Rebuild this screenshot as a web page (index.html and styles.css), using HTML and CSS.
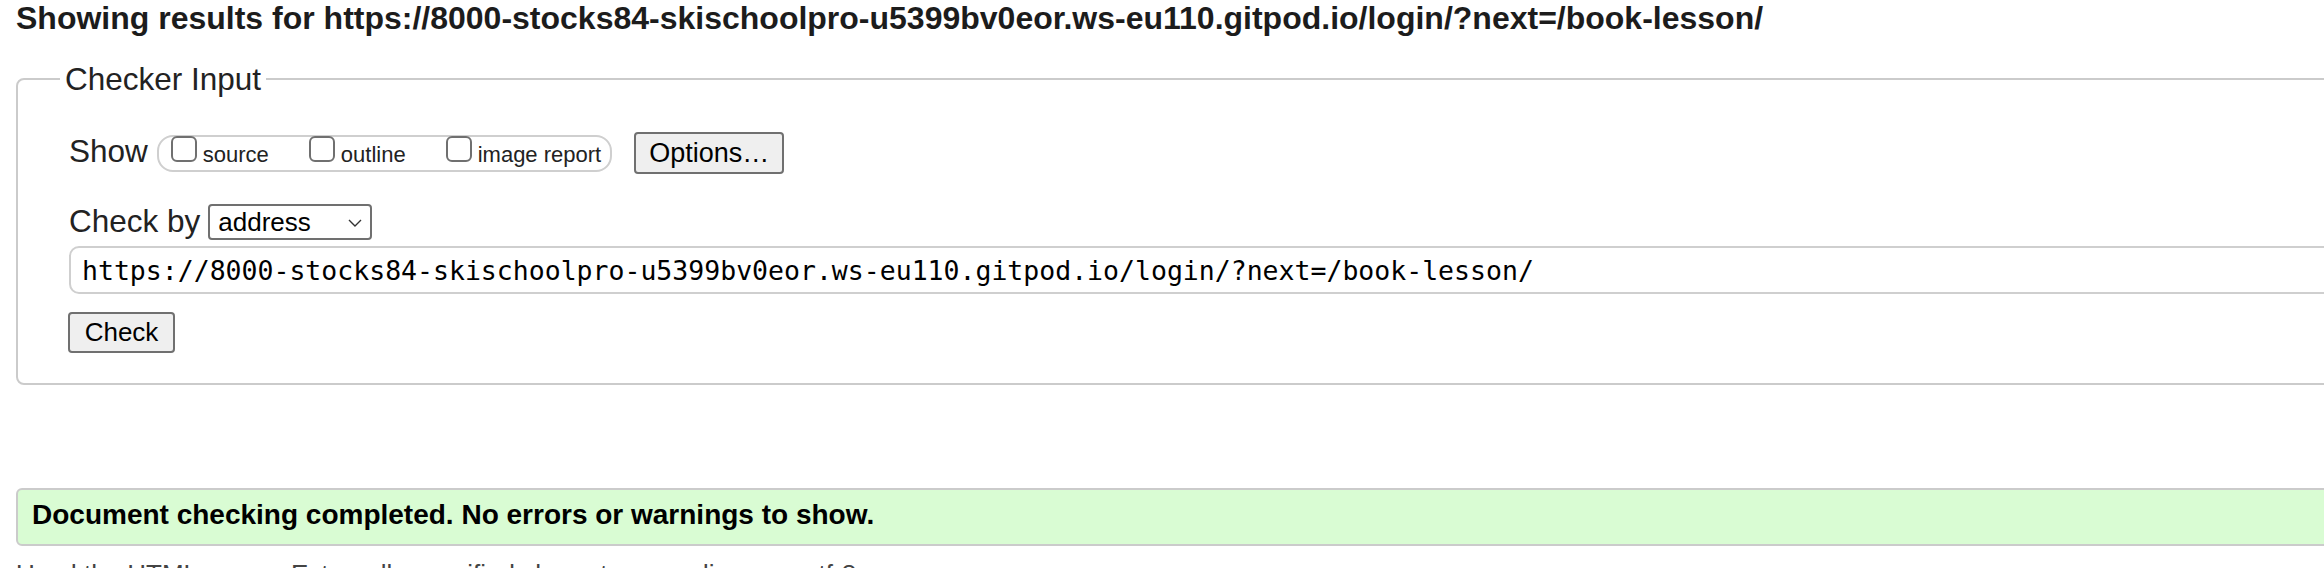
FILE: index.html
```html
<!DOCTYPE html>
<html lang="en">
<head>
<meta charset="utf-8">
<title>Showing results for https://8000-stocks84-skischoolpro-u5399bv0eor.ws-eu110.gitpod.io/login/?next=/book-lesson/ - Nu Html Checker</title>
<link rel="stylesheet" href="styles.css">
</head>
<body>
<h2 class="results-title">Showing results for https://8000-stocks84-skischoolpro-u5399bv0eor.ws-eu110.gitpod.io/login/?next=/book-lesson/</h2>
<form class="checker-form">
<fieldset class="checker-input">
<legend class="checker-legend">Checker Input</legend>
<div class="show-row">
<span class="row-label">Show</span>
<span class="show-pill"><label class="opt"><input class="cb" type="checkbox">source</label><label class="opt"><input class="cb" type="checkbox">outline</label><label class="opt"><input class="cb" type="checkbox">image report</label></span>
<button type="button" class="btn btn-options">Options…</button>
</div>
<div class="checkby-row">
<span class="row-label">Check by</span>
<span class="select-wrap">
<select class="select"><option>address</option></select>
<svg class="chevron" width="14" height="8" viewBox="0 0 14 8"><path d="M1 1 L7 7 L13 1" fill="none" stroke="#333" stroke-width="1.4"/></svg>
</span>
</div>
<input class="url-input" type="text" value="https://8000-stocks84-skischoolpro-u5399bv0eor.ws-eu110.gitpod.io/login/?next=/book-lesson/">
<div class="check-row"><button type="button" class="btn btn-check">Check</button></div>
</fieldset>
</form>
<p class="success">Document checking completed. No errors or warnings to show.</p>
<p class="details">Used the HTML parser. Externally specified character encoding was utf-8.</p>
</body>
</html>
```
FILE: styles.css
```css
html, body {
  overflow: hidden;
}
body {
  margin: 0;
  padding: 0 0 0 16px;
  background: #fff;
  color: #222;
  font-family: "Liberation Sans", Arial, sans-serif;
}
.results-title {
  margin: 0;
  font-size: 32px;
  line-height: 37px;
  font-weight: bold;
  color: #1c1c1c;
  white-space: nowrap;
}
.checker-form {
  margin: 24px 0 0 0;
}
.checker-input {
  box-sizing: border-box;
  width: 2400px;
  margin: 0;
  border: 2px solid #cbcbcb;
  border-radius: 8px;
  padding: 35px 0 30px 51px;
}
.checker-legend {
  margin-left: -9px;
  padding: 0 5px;
  font-size: 31.5px;
  line-height: 36px;
  color: #222;
}
.show-row, .checkby-row {
  display: flex;
  align-items: flex-start;
}
.row-label {
  font-size: 31.5px;
  line-height: 36px;
  color: #222;
  white-space: nowrap;
}
.show-row .row-label {
  margin-top: 1px;
}
.checkby-row .row-label {
  margin-top: -1px;
}
.show-pill {
  display: block;
  box-sizing: border-box;
  height: 37px;
  margin: 3px 0 0 9px;
  padding: 0 9px 0 12px;
  border: 2px solid #cfcfcf;
  border-radius: 16px;
  font-size: 22px;
  line-height: 26px;
  white-space: nowrap;
  color: #222;
}
.opt + .opt {
  margin-left: 40px;
}
.cb {
  -webkit-appearance: none;
  appearance: none;
  box-sizing: border-box;
  width: 26px;
  height: 26px;
  margin: -1px 6px 0 0;
  padding: 0;
  border: 2px solid #707070;
  border-radius: 6px;
  background: #fff;
  vertical-align: baseline;
}
.btn {
  box-sizing: border-box;
  background: #efefef;
  border: 2px solid #707070;
  border-radius: 4px;
  color: #000;
  font-family: "Liberation Sans", Arial, sans-serif;
  padding: 0;
}
.btn-options {
  width: 150px;
  height: 42px;
  margin-left: 22px;
  font-size: 27px;
}
.checkby-row {
  margin-top: 30px;
}
.select-wrap {
  position: relative;
  display: block;
  margin-left: 8px;
}
.select {
  -webkit-appearance: none;
  appearance: none;
  box-sizing: border-box;
  display: block;
  width: 164px;
  height: 36px;
  margin: 0;
  padding: 0 0 0 8px;
  border: 2px solid #707070;
  border-radius: 4px;
  background: #fff;
  color: #000;
  font-family: "Liberation Sans", Arial, sans-serif;
  font-size: 26px;
}
.chevron {
  position: absolute;
  left: 140px;
  top: 15px;
}
.url-input {
  display: block;
  box-sizing: border-box;
  width: 2400px;
  height: 48px;
  margin: 6px 0 0 0;
  padding: 0 0 0 11px;
  border: 2px solid #cfcfcf;
  border-radius: 10px;
  background: #fff;
  color: #000;
  font-family: "DejaVu Sans Mono", "Liberation Mono", monospace;
  font-size: 26.5px;
}
.check-row {
  margin-top: 18px;
}
.btn-check {
  display: block;
  width: 107px;
  height: 41px;
  margin-left: -1px;
  font-size: 26px;
}
.success {
  box-sizing: border-box;
  width: 2400px;
  margin: 103px 0 0 0;
  padding: 9px 14px 13px 14px;
  border: 2px solid #cbcbcb;
  border-radius: 6px;
  background: #d9fcd3;
  color: #000;
  font-size: 28px;
  line-height: 32px;
  font-weight: bold;
  white-space: nowrap;
}
.details {
  margin: 13px 0 0 0;
  font-size: 26px;
  line-height: 30px;
  color: #444;
  white-space: nowrap;
}
```
